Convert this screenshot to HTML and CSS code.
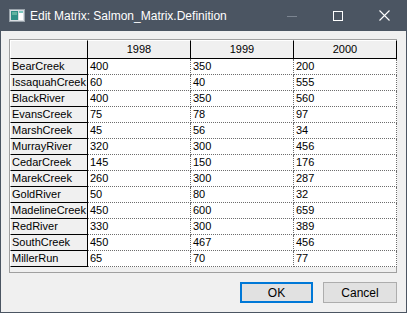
FILE: index.html
```html
<!DOCTYPE html>
<html lang="en">
<head>
    <meta charset="UTF-8">
    <title>Edit Matrix: Salmon_Matrix.Definition</title>
    <link rel="stylesheet" href="styles.css">
</head>
<body>
    <div class="window">
        <div class="titlebar">
            <svg class="app-icon" width="16" height="13" viewBox="0 0 16 13">
                <rect x="0.5" y="0.5" width="15" height="12" fill="#d8dde2" stroke="#9aa3ab"/>
                <rect x="2" y="2" width="7" height="9" fill="#2e8f86"/>
                <rect x="3" y="3" width="5" height="3" fill="#5fb3a0"/>
                <rect x="10" y="2" width="4" height="9" fill="#ffffff"/>
                <rect x="10" y="2" width="4" height="2" fill="#7ec8c0"/>
            </svg>
            <span class="title">Edit Matrix: Salmon_Matrix.Definition</span>
            <div class="controls">
                <span class="ctl ctl-min"><svg width="10" height="10" viewBox="0 0 10 10"><line x1="0" y1="5.5" x2="10" y2="5.5" stroke="#7c8591" stroke-width="1"/></svg></span>
                <span class="ctl"><svg width="10" height="10" viewBox="0 0 10 10"><rect x="0.5" y="0.5" width="9" height="9" fill="none" stroke="#ffffff" stroke-width="1"/></svg></span>
                <span class="ctl"><svg width="11" height="11" viewBox="0 0 11 11"><path d="M0.5 0.5 L10.5 10.5 M10.5 0.5 L0.5 10.5" stroke="#ffffff" stroke-width="1.1"/></svg></span>
            </div>
        </div>
        <div class="client">
            <div class="grid-frame">
                <div class="grid">
                    <div class="hcell corner"></div>
                    <div class="hcell">1998</div>
                    <div class="hcell">1999</div>
                    <div class="hcell">2000</div>

                    <div class="rhead">BearCreek</div><div class="cell">400</div><div class="cell">350</div><div class="cell">200</div>
                    <div class="rhead">IssaquahCreek</div><div class="cell">60</div><div class="cell">40</div><div class="cell">555</div>
                    <div class="rhead">BlackRiver</div><div class="cell">400</div><div class="cell">350</div><div class="cell">560</div>
                    <div class="rhead">EvansCreek</div><div class="cell">75</div><div class="cell">78</div><div class="cell">97</div>
                    <div class="rhead">MarshCreek</div><div class="cell">45</div><div class="cell">56</div><div class="cell">34</div>
                    <div class="rhead">MurrayRiver</div><div class="cell">320</div><div class="cell">300</div><div class="cell">456</div>
                    <div class="rhead">CedarCreek</div><div class="cell">145</div><div class="cell">150</div><div class="cell">176</div>
                    <div class="rhead">MarekCreek</div><div class="cell">260</div><div class="cell">300</div><div class="cell">287</div>
                    <div class="rhead">GoldRiver</div><div class="cell">50</div><div class="cell">80</div><div class="cell">32</div>
                    <div class="rhead">MadelineCreek</div><div class="cell">450</div><div class="cell">600</div><div class="cell">659</div>
                    <div class="rhead">RedRiver</div><div class="cell">330</div><div class="cell">300</div><div class="cell">389</div>
                    <div class="rhead">SouthCreek</div><div class="cell">450</div><div class="cell">467</div><div class="cell">456</div>
                    <div class="rhead">MillerRun</div><div class="cell">65</div><div class="cell">70</div><div class="cell">77</div>
                </div>
            </div>
            <div class="buttons">
                <button class="btn btn-default">OK</button>
                <button class="btn">Cancel</button>
            </div>
        </div>
    </div>
</body>
</html>
```

FILE: styles.css
```css
* {
    margin: 0;
    padding: 0;
    box-sizing: border-box;
}

body {
    font-family: "Liberation Sans", Arial, sans-serif;
    background: #f0f0f0;
}

.window {
    width: 407px;
    height: 313px;
    background: #4b5562;
    display: flex;
    flex-direction: column;
}

/* title bar */
.titlebar {
    height: 31px;
    display: flex;
    align-items: center;
    color: #ffffff;
    flex-shrink: 0;
}

.app-icon {
    margin-left: 9px;
    margin-right: 5px;
}

.title {
    font-size: 12px;
    flex: 1;
}

.controls {
    display: flex;
    height: 100%;
}

.ctl {
    width: 46px;
    display: flex;
    align-items: center;
    justify-content: center;
}

/* client area */
.client {
    flex: 1;
    margin: 0 1px 1px 1px;
    background: #f0f0f0;
    padding: 8px 9px 0 8px;
}

.grid-frame {
    height: 234px;
    border: 1px solid #a0a0a0;
    background: #f0f0f0;
}

.grid {
    display: grid;
    grid-template-columns: 78px 103px 103px 103px;
    grid-template-rows: 19px;
    grid-auto-rows: 16px;
    font-size: 11px;
    color: #000000;
}

.hcell {
    background: #f0f0f0;
    border-right: 1px solid #000000;
    border-bottom: 1px solid #000000;
    border-top: 1px solid #ffffff;
    text-align: center;
    line-height: 17px;
}

.hcell.corner {
    border-left: 1px solid #ffffff;
}

.rhead {
    background: #f0f0f0;
    border-right: 1px solid #000000;
    border-bottom: 1px solid #000000;
    border-left: 1px solid #ffffff;
    padding-left: 1px;
    line-height: 15px;
    white-space: nowrap;
}

.cell {
    background: #ffffff;
    border-right: 1px dotted #6d6d6d;
    border-bottom: 1px dotted #6d6d6d;
    padding-left: 2px;
    line-height: 15px;
}

/* buttons */
.buttons {
    display: flex;
    justify-content: flex-end;
    gap: 10px;
    margin-top: 9px;
}

.btn {
    height: 21px;
    width: 74px;
    background: #e1e1e1;
    border: 1px solid #adadad;
    font-family: "Liberation Sans", Arial, sans-serif;
    font-size: 12px;
    color: #000000;
}

.btn-default {
    width: 73px;
    border: 2px solid #0078d7;
}
```
